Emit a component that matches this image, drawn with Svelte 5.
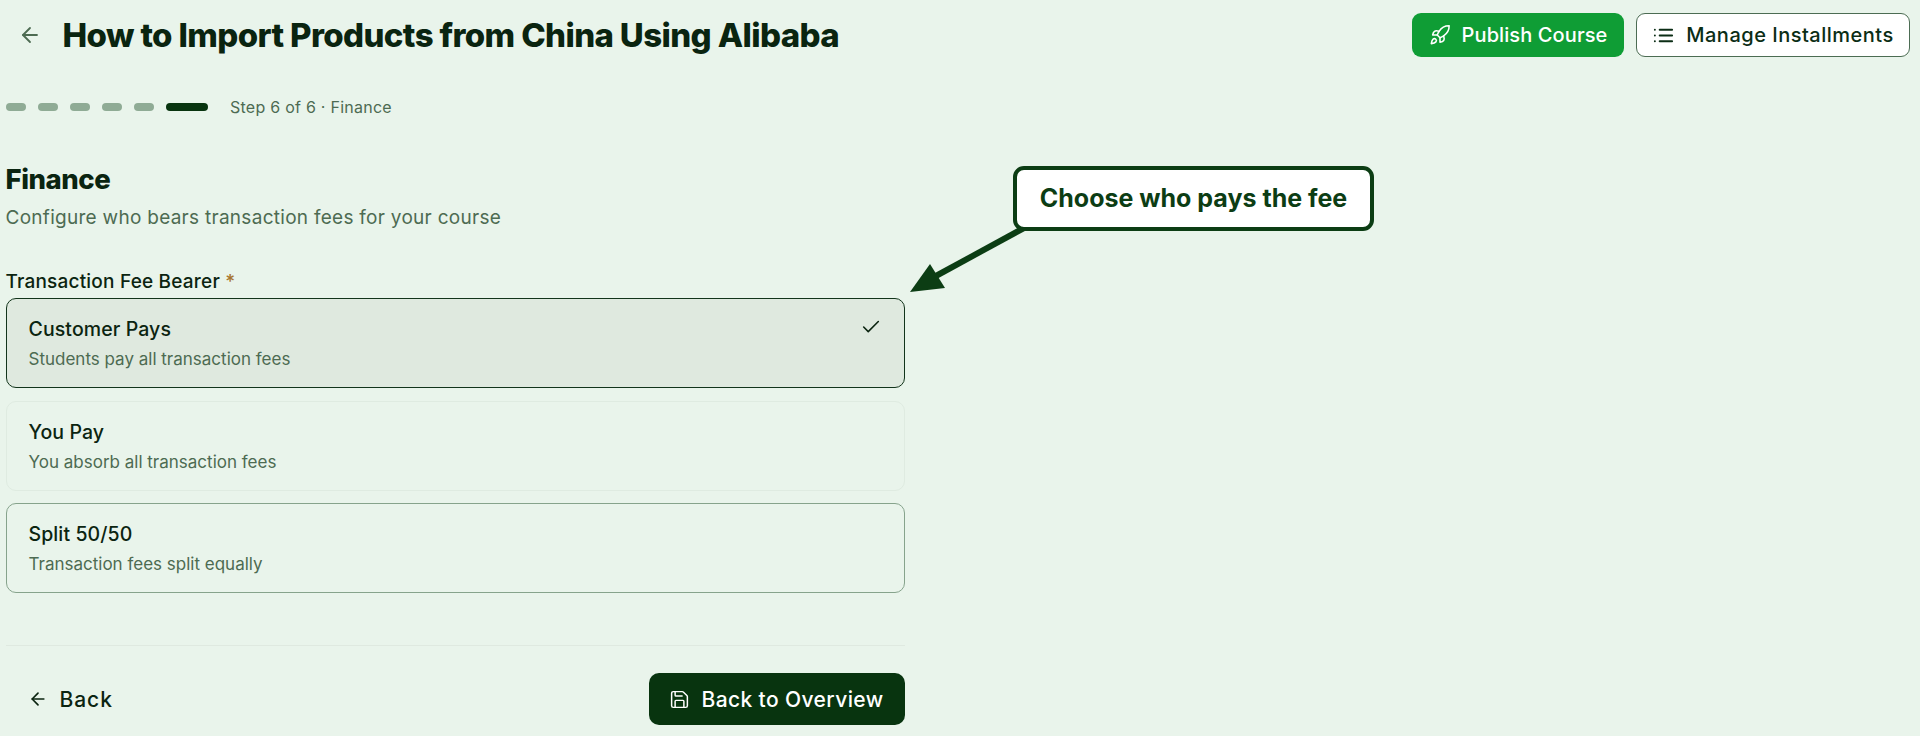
<script>
  const steps = [0, 1, 2, 3, 4];
  const options = [
    { title: 'Customer Pays', sub: 'Students pay all transaction fees', kind: 'selected' },
    { title: 'You Pay', sub: 'You absorb all transaction fees', kind: 'faint' },
    { title: 'Split 50/50', sub: 'Transaction fees split equally', kind: 'plain' }
  ];
</script>

<div class="page">
  <header class="top">
    <div class="top-left">
      <svg class="ic back-ic" viewBox="0 0 24 24"><path d="m12 19-7-7 7-7" /><path d="M19 12H5" /></svg>
      <h1>How to Import Products from China Using Alibaba</h1>
    </div>
    <div class="actions">
      <button class="btn publish">
        <svg class="ic" viewBox="0 0 24 24">
          <path d="M4.5 16.5c-1.5 1.26-2 5-2 5s3.74-.5 5-2c.71-.84.7-2.13-.09-2.91a2.18 2.18 0 0 0-2.91-.09z" />
          <path d="m12 15-3-3a22 22 0 0 1 2-3.95A12.88 12.88 0 0 1 22 2c0 2.72-.78 7.5-6 11a22.35 22.35 0 0 1-4 2z" />
          <path d="M9 12H4s.55-3.03 2-4c1.62-1.08 5 0 5 0" />
          <path d="M12 15v5s3.03-.55 4-2c1.08-1.62 0-5 0-5" />
        </svg>
        Publish Course
      </button>
      <button class="btn manage">
        <svg class="ic list" viewBox="0 0 24 24"><path d="M3 12h.01M3 18h.01M3 6h.01M8 12h13M8 18h13M8 6h13" /></svg>
        Manage Installments
      </button>
    </div>
  </header>

  <div class="steps">
    {#each steps as s}<span class="seg"></span>{/each}
    <span class="seg current"></span>
    <span class="step-text">Step 6 of 6 · Finance</span>
  </div>

  <main class="form">
    <h2>Finance</h2>
    <p class="desc">Configure who bears transaction fees for your course</p>
    <div class="label">Transaction Fee Bearer <span class="req">*</span></div>
    <div class="cards">
      {#each options as o}
        <div class="card {o.kind}">
          <div class="card-title">{o.title}</div>
          <div class="card-sub">{o.sub}</div>
          {#if o.kind === 'selected'}
            <svg class="ic check" viewBox="0 0 24 24"><path d="M20 6 9 17l-5-5" /></svg>
          {/if}
        </div>
      {/each}
    </div>
    <footer class="foot">
      <button class="ghost">
        <svg class="ic" viewBox="0 0 24 24"><path d="m12 19-7-7 7-7" /><path d="M19 12H5" /></svg>
        Back
      </button>
      <button class="overview">
        <svg class="ic" viewBox="0 0 24 24">
          <path d="M15.2 3a2 2 0 0 1 1.4.6l3.8 3.8a2 2 0 0 1 .6 1.4V19a2 2 0 0 1-2 2H5a2 2 0 0 1-2-2V5a2 2 0 0 1 2-2z" />
          <path d="M17 21v-7a1 1 0 0 0-1-1H8a1 1 0 0 0-1 1v7" />
          <path d="M7 3v4a1 1 0 0 0 1 1h7" />
        </svg>
        Back to Overview
      </button>
    </footer>
  </main>

  <svg class="pointer" viewBox="0 0 1920 736" aria-hidden="true">
    <line x1="1024" y1="228" x2="934" y2="277" />
    <polygon points="910,292 930,264 945,288" />
  </svg>
  <div class="callout">Choose who pays the fee</div>
</div>

<style>
  :global(body) {
    margin: 0;
    background: #e9f4eb;
  }
  .page {
    position: relative;
    height: 736px;
    overflow: hidden;
    background: #e9f4eb;
    font-family: Inter, "Liberation Sans", sans-serif;
    color: #0b2410;
  }
  .ic {
    fill: none;
    stroke: currentColor;
    stroke-width: 2;
    stroke-linecap: round;
    stroke-linejoin: round;
    flex: none;
  }
  .top {
    display: flex;
    justify-content: space-between;
    align-items: center;
    padding: 13px 10px 0 18px;
  }
  .top-left {
    display: flex;
    align-items: center;
    gap: 20.5px;
  }
  .back-ic {
    width: 24px;
    height: 24px;
    color: #4d6b52;
    stroke-width: 1.8;
  }
  h1 {
    margin: 0;
    font-size: 33px;
    line-height: 44px;
    font-weight: 800;
    letter-spacing: -0.62px;
    color: #0a2410;
  }
  .actions {
    display: flex;
    gap: 12px;
  }
  .btn {
    display: flex;
    align-items: center;
    justify-content: center;
    gap: 11px;
    height: 44px;
    box-sizing: border-box;
    border-radius: 9px;
    font: 500 20px Inter, sans-serif;
  }
  .btn .ic {
    width: 22px;
    height: 22px;
    stroke-width: 1.7;
  }
  .btn .list {
    stroke-width: 2;
    width: 23px;
    height: 23px;
  }
  .publish {
    width: 212px;
    background: #0f9d35;
    color: #fff;
    border: 0;
    letter-spacing: 0.1px;
  }
  .manage {
    width: 274px;
    background: #fff;
    color: #0b2d15;
    border: 1.5px solid #4c6c53;
    letter-spacing: 0.5px;
  }
  .steps {
    display: flex;
    align-items: center;
    gap: 12px;
    margin: 38px 0 0 6px;
    height: 24px;
  }
  .seg {
    width: 20px;
    height: 8px;
    border-radius: 4px;
    background: #8fab95;
  }
  .seg.current {
    width: 42px;
    background: #08340f;
  }
  .step-text {
    margin-left: 10px;
    font-size: 16px;
    letter-spacing: 0.25px;
    color: #4d6b52;
  }
  .form {
    width: 899px;
    margin: 43px 0 0 5.5px;
  }
  h2 {
    margin: 0;
    font-size: 27.5px;
    line-height: 34px;
    font-weight: 800;
    letter-spacing: -0.45px;
    color: #0a2410;
  }
  .desc {
    margin: 8px 0 0;
    font-size: 19px;
    line-height: 28px;
    letter-spacing: 0.28px;
    color: #4d6b52;
  }
  .label {
    margin-top: 38px;
    font-size: 19px;
    line-height: 24px;
    font-weight: 500;
    letter-spacing: 0.2px;
  }
  .req {
    color: #a8762f;
  }
  .cards {
    display: flex;
    flex-direction: column;
    gap: 12.5px;
    margin-top: 4px;
  }
  .card {
    position: relative;
    box-sizing: border-box;
    height: 90px;
    padding: 17px 22px;
    border-radius: 10px;
    border: 1px solid #c9d9cc;
  }
  .card.selected {
    background: #dfe9df;
    border-color: #12341b;
  }
  .card.faint {
    border-color: #dfebe1;
  }
  .card.plain {
    border-color: #86a38c;
  }
  .card-title {
    font-size: 19.5px;
    line-height: 26px;
    font-weight: 500;
    letter-spacing: 0.1px;
    color: #0b2410;
  }
  .card-sub {
    margin-top: 6px;
    font-size: 17px;
    line-height: 22px;
    color: #4d6b52;
  }
  .check {
    position: absolute;
    top: 17px;
    right: 22px;
    width: 22px;
    height: 22px;
    stroke-width: 1.7;
  }
  .foot {
    display: flex;
    justify-content: space-between;
    align-items: center;
    margin-top: 52px;
    padding-top: 27px;
    border-top: 1.5px solid #dfe9e0;
  }
  .ghost {
    display: flex;
    align-items: center;
    gap: 12px;
    padding: 0 0 0 22px;
    background: none;
    border: 0;
    color: #0b2410;
    font: 500 21px Inter, sans-serif;
    letter-spacing: 0.95px;
  }
  .ghost .ic {
    width: 20px;
    height: 20px;
  }
  .overview {
    display: flex;
    align-items: center;
    justify-content: center;
    gap: 11px;
    width: 256px;
    height: 52px;
    border: 0;
    border-radius: 10px;
    background: #08340f;
    color: #fff;
    font: 500 21px Inter, sans-serif;
    letter-spacing: 0.4px;
  }
  .overview .ic {
    width: 21px;
    height: 21px;
    stroke-width: 1.7;
  }
  .pointer {
    position: absolute;
    inset: 0;
    width: 1920px;
    height: 736px;
  }
  .pointer line {
    stroke: #0c3d14;
    stroke-width: 6;
  }
  .pointer polygon {
    fill: #0c3d14;
  }
  .callout {
    position: absolute;
    left: 1013px;
    top: 166px;
    width: 361px;
    height: 65px;
    box-sizing: border-box;
    display: flex;
    align-items: center;
    justify-content: center;
    padding-bottom: 1px;
    background: #fff;
    border: 4px solid #0c3d14;
    border-radius: 11px;
    font-size: 25px;
    font-weight: 700;
    color: #0c3d14;
  }
</style>
